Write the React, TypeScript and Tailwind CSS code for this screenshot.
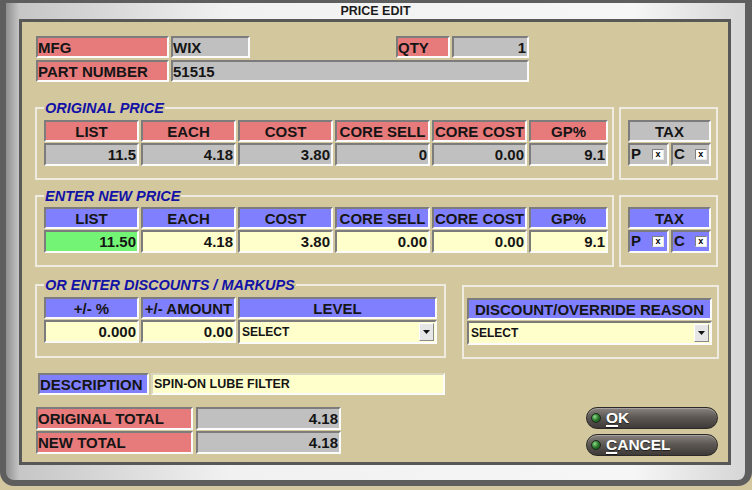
import React from "react";

// ---------------------------------------------------------------------------
// Shared cell styles
// ---------------------------------------------------------------------------

const sunk =
  "border-2 border-t-[#7c7c7c] border-l-[#7c7c7c] border-r-[#fbfbfb] border-b-[#fbfbfb] flex items-center overflow-hidden whitespace-nowrap";

const RED = "bg-[#e77a7a]";
const GRAY = "bg-[#c0c0c0]";
const BLUE = "bg-[#8080ff]";
const YEL = "bg-[#ffffcc]";
const GREEN = "bg-[#74f474]";

const groupBox = "border-2 border-[#efebe0]";
const legendText =
  "px-[1px] text-[14.5px] leading-[16px] font-bold italic text-[#1212a6]";

function Label({ w, bg, children, h = "h-[22px]" }: { w: string; bg: string; children: React.ReactNode; h?: string }) {
  return (
    <div className={`${sunk} ${w} ${h} ${bg} text-[15px] font-bold text-[#151515] leading-none`}>
      {children}
    </div>
  );
}

function Head({ w, bg, children }: { w: string; bg: string; children: React.ReactNode }) {
  return (
    <div className={`${sunk} ${w} h-[22px] ${bg} justify-center text-[15px] font-bold text-[#151515] leading-none`}>
      {children}
    </div>
  );
}

function Num({ w, bg, children, h = "h-[23px]" }: { w: string; bg: string; children: React.ReactNode; h?: string }) {
  return (
    <div className={`${sunk} ${w} ${h} ${bg} justify-end pr-[1px] text-[15px] font-bold text-[#151515] leading-none`}>
      {children}
    </div>
  );
}

function Check() {
  return (
    <span className="flex h-[11px] w-[12px] items-center justify-center border border-t-[#808080] border-l-[#808080] border-r-[#e8e8e8] border-b-[#e8e8e8] bg-white text-[9px] font-bold leading-none text-black">
      x
    </span>
  );
}

function TaxBox({ bg }: { bg: string }) {
  return (
    <div className="flex flex-col gap-[1px]">
      <Head w="w-[83px]" bg={bg}>TAX</Head>
      <div className="flex gap-[2px]">
        <div className={`${sunk} w-[41px] h-[23px] ${bg} pl-[1px] gap-[11px] text-[15px] font-bold text-[#151515]`}>
          <span>P</span>
          <Check />
        </div>
        <div className={`${sunk} w-[40px] h-[23px] ${bg} pl-[1px] gap-[10px] text-[15px] font-bold text-[#151515]`}>
          <span>C</span>
          <Check />
        </div>
      </div>
    </div>
  );
}

function Select({ w }: { w: string }) {
  return (
    <div className={`${sunk} ${w} h-[24px] ${YEL} justify-between pl-[2px] pr-[1px] text-[12px] font-bold text-[#151515]`}>
      <span>SELECT</span>
      <span className="flex h-[18px] w-[15px] items-center justify-center border border-t-white border-l-white border-r-[#8a8a8a] border-b-[#8a8a8a] bg-[#e6e6e6]">
        <svg width="7" height="4" viewBox="0 0 7 4">
          <path d="M0 0h7L3.5 4z" fill="#111" />
        </svg>
      </span>
    </div>
  );
}

function PillButton({ letter, rest }: { letter: string; rest: string }) {
  return (
    <div className="flex h-[22px] w-[132px] items-center rounded-full border border-[#2c2a28] bg-[linear-gradient(180deg,#8a8480_0%,#5e5955_45%,#3e3a37_100%)] pl-[4px] shadow-[inset_0_1px_0_rgba(255,255,255,0.25)]">
      <span className="h-[10px] w-[10px] rounded-full border border-[#1c2a1c] bg-[radial-gradient(circle_at_35%_35%,#8fdc8f_0%,#2f7d2f_45%,#123d12_100%)]" />
      <span className="ml-[5px] text-[15.5px] font-bold leading-none text-white [text-shadow:0_1px_1px_rgba(0,0,0,0.6)]">
        <span className="underline decoration-[1.5px] underline-offset-[2px]">{letter}</span>
        {rest}
      </span>
    </div>
  );
}

// ---------------------------------------------------------------------------
// App
// ---------------------------------------------------------------------------

export default function App() {
  const cols = ["LIST", "EACH", "COST", "CORE SELL", "CORE COST"];
  const orig = ["11.5", "4.18", "3.80", "0", "0.00"];
  const next = ["11.50", "4.18", "3.80", "0.00", "0.00"];

  return (
    <div className="h-[490px] w-[752px] overflow-hidden bg-[#d3c7a0] font-['Liberation_Sans',Arial,sans-serif]">
      <div className="flex h-[486px] w-[752px] flex-col rounded-b-[14px] border-t-[3px] border-b-[6px] border-l-[6px] border-r-[7px] border-[#5e5e5e] bg-[linear-gradient(90deg,#8f8f8f_0%,#c6c6c6_1.8%,#f1f1f1_30%,#f6f6f6_85%,#d6d6d6_100%)]">
        {/* title */}
        <div className="flex h-[16px] items-center justify-center text-[12.5px] font-bold leading-none text-[#1b1b1b]">
          PRICE EDIT
        </div>

        {/* inner panel */}
        <div className="ml-[13px] flex h-[446px] w-[712px] flex-col border-[3px] border-[#585858] bg-[#d3c79d] pl-[13px]">
          {/* mfg / part number */}
          <div className="ml-[1px] mt-[14px] flex flex-col gap-[2px]">
            <div className="flex">
              <Label w="w-[133px]" bg={RED}>MFG</Label>
              <div className="ml-[2px]">
                <Label w="w-[79px]" bg={GRAY}>WIX</Label>
              </div>
              <div className="ml-[146px]">
                <Label w="w-[54px]" bg={RED}>QTY</Label>
              </div>
              <div className="ml-[2px]">
                <Num w="w-[77px]" bg={GRAY} h="h-[22px]">1</Num>
              </div>
            </div>
            <div className="flex">
              <Label w="w-[133px]" bg={RED}>PART NUMBER</Label>
              <div className="ml-[2px]">
                <Label w="w-[358px]" bg={GRAY}>51515</Label>
              </div>
            </div>
          </div>

          {/* original price */}
          <div className="mt-[18px] flex items-start gap-[5px]">
            <fieldset className={`${groupBox} w-[579px] pl-[7px] pr-[4px] pt-[4px] pb-[12px]`}>
              <legend className={legendText}>ORIGINAL PRICE</legend>
              <div className="flex flex-col gap-[1px]">
                <div className="flex gap-[2px]">
                  {cols.map((c) => (
                    <Head key={c} w="w-[95px]" bg={RED}>{c}</Head>
                  ))}
                  <Head w="w-[79px]" bg={RED}>GP%</Head>
                </div>
                <div className="flex gap-[2px]">
                  {orig.map((v, i) => (
                    <Num key={i} w="w-[95px]" bg={GRAY}>{v}</Num>
                  ))}
                  <Num w="w-[79px]" bg={GRAY}>9.1</Num>
                </div>
              </div>
            </fieldset>
            <div className={`${groupBox} mt-[7px] w-[99px] pl-[7px] pt-[11px] pb-[12px]`}>
              <TaxBox bg={GRAY} />
            </div>
          </div>

          {/* enter new price */}
          <div className="mt-[8px] flex items-start gap-[5px]">
            <fieldset className={`${groupBox} w-[579px] pl-[7px] pr-[4px] pt-[3px] pb-[12px]`}>
              <legend className={legendText}>ENTER NEW PRICE</legend>
              <div className="flex flex-col gap-[1px]">
                <div className="flex gap-[2px]">
                  {cols.map((c) => (
                    <Head key={c} w="w-[95px]" bg={BLUE}>{c}</Head>
                  ))}
                  <Head w="w-[79px]" bg={BLUE}>GP%</Head>
                </div>
                <div className="flex gap-[2px]">
                  {next.map((v, i) => (
                    <Num key={i} w="w-[95px]" bg={i === 0 ? GREEN : YEL}>{v}</Num>
                  ))}
                  <Num w="w-[79px]" bg={YEL}>9.1</Num>
                </div>
              </div>
            </fieldset>
            <div className={`${groupBox} mt-[7px] w-[99px] pl-[7px] pt-[10px] pb-[12px]`}>
              <TaxBox bg={BLUE} />
            </div>
          </div>

          {/* discounts */}
          <div className="mt-[10px] flex items-start gap-[16px]">
            <fieldset className={`${groupBox} w-[411px] px-[7px] pt-[4px] pb-[12px]`}>
              <legend className={legendText}>OR ENTER DISCOUNTS / MARKUPS</legend>
              <div className="flex flex-col gap-[1px]">
                <div className="flex gap-[2px]">
                  <Head w="w-[95px]" bg={BLUE}>+/- %</Head>
                  <Head w="w-[95px]" bg={BLUE}>+/- AMOUNT</Head>
                  <Head w="w-[199px]" bg={BLUE}>LEVEL</Head>
                </div>
                <div className="flex gap-[2px]">
                  <Num w="w-[95px]" bg={YEL}>0.000</Num>
                  <Num w="w-[95px]" bg={YEL}>0.00</Num>
                  <Select w="w-[199px]" />
                </div>
              </div>
            </fieldset>
            <div className={`${groupBox} mt-[8px] flex w-[257px] flex-col gap-[1px] pl-[3px] pt-[11px] pb-[12px]`}>
              <Head w="w-[245px]" bg={BLUE}>DISCOUNT/OVERRIDE REASON</Head>
              <Select w="w-[245px]" />
            </div>
          </div>

          {/* description */}
          <div className="ml-[3px] mt-[14px] flex gap-[2px]">
            <Label w="w-[111px]" bg={BLUE}>DESCRIPTION</Label>
            <div className={`${sunk} w-[294px] h-[22px] ${YEL} border-t-[#d8d8c0] border-l-[#d8d8c0] pl-[1px] text-[12.5px] font-bold text-[#151515]`}>
              SPIN-ON LUBE FILTER
            </div>
          </div>

          {/* totals + buttons */}
          <div className="mt-[12px] flex items-start justify-between pr-[10px]">
            <div className="ml-[1px] flex flex-col gap-[1px]">
              <div className="flex gap-[3px]">
                <Label w="w-[157px]" bg={RED} h="h-[23px]">ORIGINAL TOTAL</Label>
                <Num w="w-[145px]" bg={GRAY}>4.18</Num>
              </div>
              <div className="flex gap-[3px]">
                <Label w="w-[157px]" bg={RED} h="h-[23px]">NEW TOTAL</Label>
                <Num w="w-[145px]" bg={GRAY}>4.18</Num>
              </div>
            </div>
            <div className="flex flex-col gap-[5px]">
              <PillButton letter="O" rest="K" />
              <PillButton letter="C" rest="ANCEL" />
            </div>
          </div>
        </div>
      </div>
    </div>
  );
}
